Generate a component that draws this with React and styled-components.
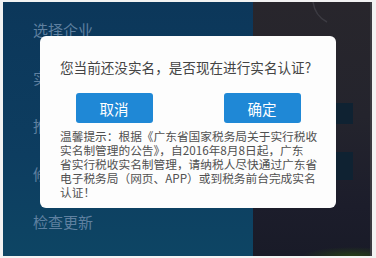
import React from 'react';
import styled, { createGlobalStyle } from 'styled-components';

const GlobalStyle = createGlobalStyle`
  html, body {
    margin: 0;
    padding: 0;
    background: #f4f4f4;
  }
  * {
    box-sizing: border-box;
  }
`;

const Frame = styled.div`
  position: relative;
  width: 376px;
  height: 258px;
  padding: 2px 4px 2px 3px;
  background: #f2f2f2;
  font-family: "Noto Sans CJK SC", "Noto Sans", sans-serif;
  overflow: hidden;
`;

const Screen = styled.div`
  display: grid;
  grid-template-columns: 250px 1fr;
  height: 100%;
`;

const Drawer = styled.div`
  display: flex;
  flex-direction: column;
  gap: 26px;
  padding: 17px 0 0 30px;
  background: linear-gradient(180deg, #0c375a 0%, #0d3d60 60%, #0d4564 100%);
`;

const MenuItem = styled.div`
  font-size: 15px;
  line-height: 22px;
  color: #5f80a0;
  white-space: nowrap;
`;

const Main = styled.div`
  display: flex;
  flex-direction: column;
  align-items: flex-end;
  padding-right: 17px;
  border-right: 2px solid #3a3a40;
  background:
    radial-gradient(ellipse 50px 9px at 85% 100%, rgba(40, 70, 20, 0.8), transparent),
    linear-gradient(180deg, #28262c 0%, #24242d 45%, #1c1d2b 80%, #191b28 100%);
`;

const Arc = styled.svg`
  align-self: flex-start;
  margin-left: 56px;
  width: 20px;
  height: 22px;
`;

const Block = styled.div`
  width: 80px;
  height: ${(p) => p.$h}px;
  margin-top: ${(p) => p.$top}px;
  background: #0f2232;
`;

const Overlay = styled.div`
  position: absolute;
  inset: 0;
  display: flex;
  justify-content: center;
  align-items: flex-start;
  padding-top: 36px;
`;

const Dialog = styled.div`
  width: 296px;
  height: 172px;
  padding: 21px 0 9px;
  background: #fdfdfd;
  border-radius: 6px;
`;

const Title = styled.div`
  padding: 0 20px;
  font-size: 13.6px;
  line-height: 20px;
  color: #444;
  white-space: nowrap;
`;

const ButtonRow = styled.div`
  display: grid;
  grid-template-columns: 1fr 1fr;
  justify-items: center;
  margin-top: 16px;
`;

const Button = styled.button`
  width: 77px;
  height: 30px;
  border: 0;
  border-radius: 3px;
  background: #1f88d6;
  color: #fff;
  font-family: inherit;
  font-size: 14.5px;
  padding: 0;
`;

const Tips = styled.div`
  margin-top: 6px;
  padding: 0 20px;
  font-size: 11.7px;
  line-height: 14px;
  color: #505050;
  white-space: nowrap;
`;

const menu = ['选择企业', '实名认证', '推荐给好友', '修改密码', '检查更新'];

export default function App() {
  return (
    <Frame>
      <GlobalStyle />
      <Screen>
        <Drawer>
          {menu.map((m) => (
            <MenuItem key={m}>{m}</MenuItem>
          ))}
        </Drawer>
        <Main>
          <Arc viewBox="0 0 20 22">
            <path d="M4 0 Q6 14 18 20" fill="none" stroke="#3c3b42" strokeWidth="1.5" />
          </Arc>
          <Block $top={79} $h={21} />
          <Block $top={28} $h={28} />
        </Main>
      </Screen>
      <Overlay>
        <Dialog>
          <Title>您当前还没实名，是否现在进行实名认证?</Title>
          <ButtonRow>
            <Button>取消</Button>
            <Button>确定</Button>
          </ButtonRow>
          <Tips>
            温馨提示：根据《广东省国家税务局关于实行税收
            <br />
            实名制管理的公告》，自2016年8月8日起，广东
            <br />
            省实行税收实名制管理，请纳税人尽快通过广东省
            <br />
            电子税务局（网页、APP）或到税务前台完成实名
            <br />
            认证！
          </Tips>
        </Dialog>
      </Overlay>
    </Frame>
  );
}
